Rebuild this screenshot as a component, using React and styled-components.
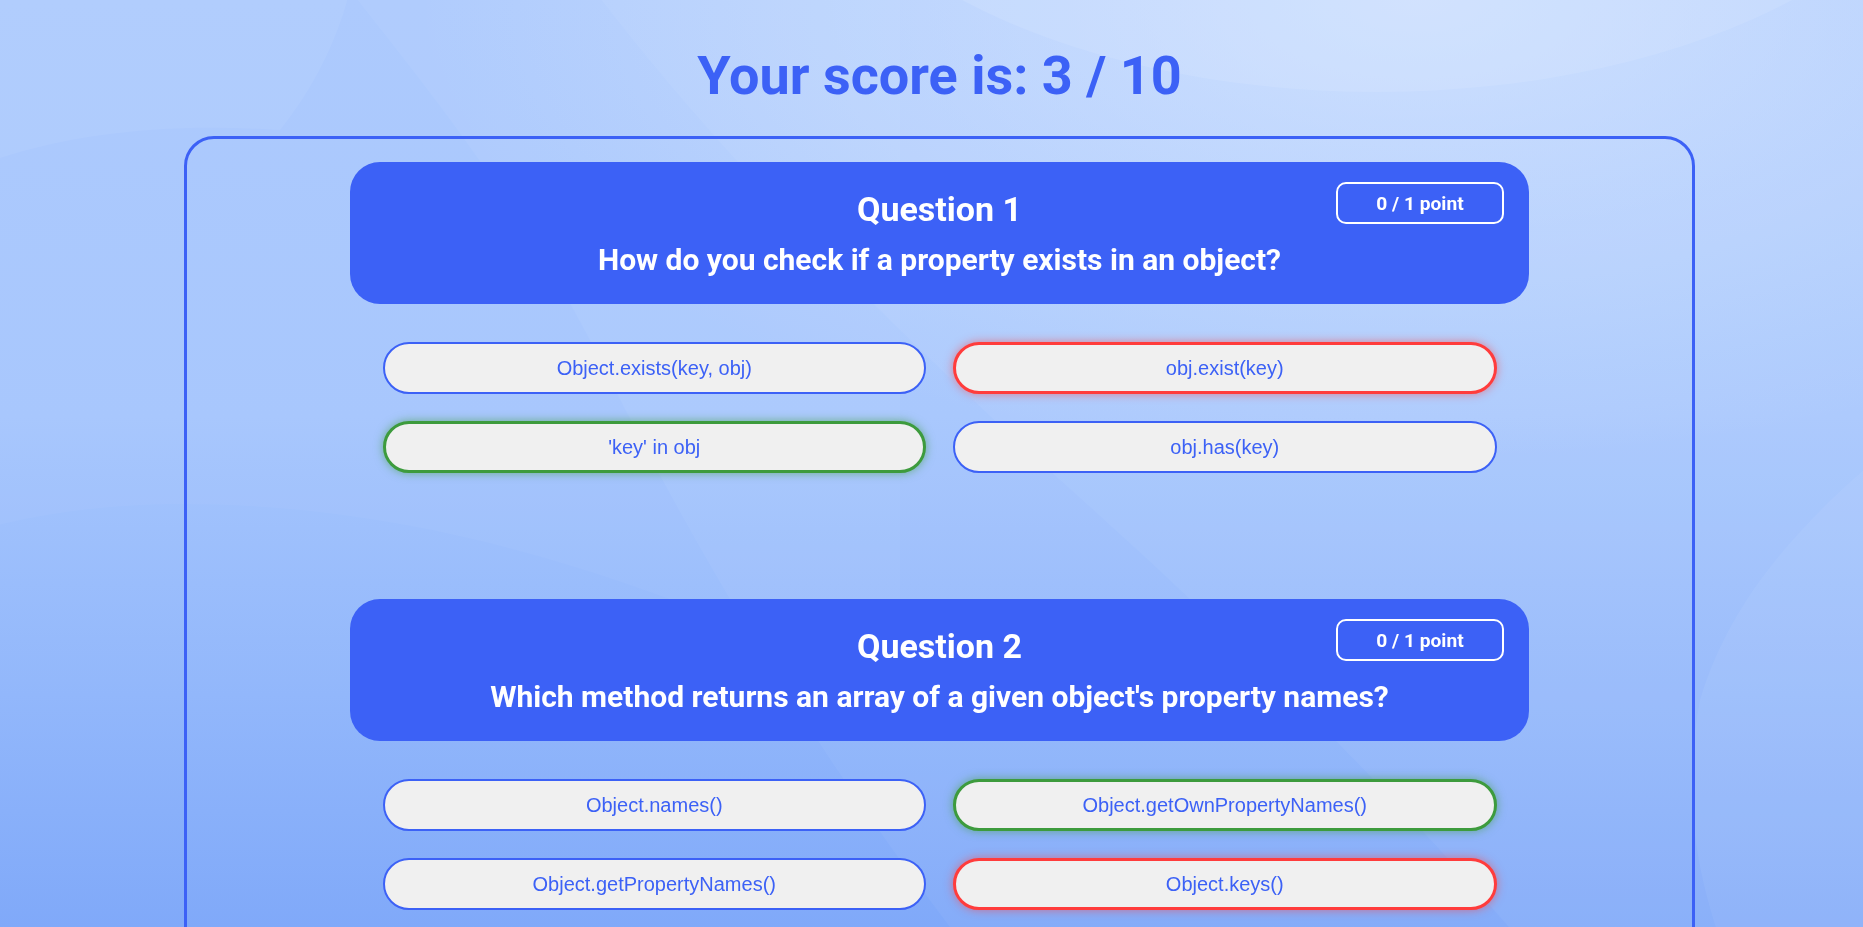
import React from "react";
import styled, { createGlobalStyle, css } from "styled-components";

const BLUE = "#3c61f6";

const GlobalStyle = createGlobalStyle`
  html, body { margin: 0; padding: 0; }
  body {
    min-height: 100vh;
    font-family: Roboto, "Noto Sans", sans-serif;
    background:
      radial-gradient(ellipse 1000px 460px at 76% 0%, rgba(220, 234, 255, 0.6), rgba(220, 234, 255, 0) 100%),
      linear-gradient(180deg, #abc9fd 0%, #a6c6fd 45%, #92b7fb 75%, #80a9f9 100%);
    background-attachment: fixed;
  }
`;

const Backdrop = styled.svg`
  position: fixed;
  inset: 0;
  width: 100%;
  height: 100%;
  z-index: 0;
  pointer-events: none;
`;

const Page = styled.main`
  position: relative;
  z-index: 1;
  display: flex;
  flex-direction: column;
  align-items: center;
  padding: 44px 0 0 16px;
`;

const Score = styled.h1`
  margin: 0 0 28px;
  font-family: Roboto, sans-serif;
  font-weight: 700;
  font-size: 54px;
  line-height: 64px;
  color: ${BLUE};
`;

const Results = styled.section`
  box-sizing: border-box;
  width: 1511px;
  border: 3px solid ${BLUE};
  border-radius: 30px;
  padding: 23px 0;
  display: flex;
  flex-direction: column;
  align-items: center;
`;

const Block = styled.article`
  width: 1179px;
  margin-bottom: 126px;
`;

const Card = styled.header`
  position: relative;
  box-sizing: border-box;
  height: 142px;
  background: ${BLUE};
  border-radius: 30px;
  padding: 27px 24px 25px;
  text-align: center;
  color: #fff;
`;

const QTitle = styled.h2`
  margin: 0 0 13px;
  font-weight: 700;
  font-size: 34px;
  line-height: 40px;
`;

const QText = styled.p`
  margin: 0;
  font-weight: 700;
  font-size: 30px;
  line-height: 36px;
`;

const Points = styled.span`
  position: absolute;
  top: 20px;
  right: 25px;
  box-sizing: border-box;
  width: 168px;
  height: 42px;
  border: 2px solid #fff;
  border-radius: 10px;
  display: flex;
  align-items: center;
  justify-content: center;
  font-weight: 700;
  font-size: 19.2px;
  color: #fff;
`;

const Answers = styled.div`
  display: grid;
  grid-template-columns: 1fr 1fr;
  gap: 27px 27px;
  margin-top: 38px;
  padding: 0 32.5px;
`;

const stateStyles = {
  correct: css`
    border: 3px solid #3d9b3d;
    box-shadow: 0 0 10px rgba(61, 155, 61, 0.6);
  `,
  wrong: css`
    border: 3px solid #ff3c3c;
    box-shadow: 0 0 10px rgba(255, 60, 60, 0.55);
  `,
  neutral: css`
    border: 2px solid ${BLUE};
  `,
};

const Answer = styled.div`
  box-sizing: border-box;
  height: 52px;
  border-radius: 26px;
  background: #f0f0f0;
  display: flex;
  align-items: center;
  justify-content: center;
  font-family: "Liberation Sans", Arial, sans-serif;
  font-size: 20px;
  color: ${BLUE};
  ${(p) => stateStyles[p.$state]}
`;

const questions = [
  {
    n: 1,
    text: "How do you check if a property exists in an object?",
    answers: [
      ["Object.exists(key, obj)", "neutral"],
      ["obj.exist(key)", "wrong"],
      ["'key' in obj", "correct"],
      ["obj.has(key)", "neutral"],
    ],
  },
  {
    n: 2,
    text: "Which method returns an array of a given object's property names?",
    answers: [
      ["Object.names()", "neutral"],
      ["Object.getOwnPropertyNames()", "correct"],
      ["Object.getPropertyNames()", "neutral"],
      ["Object.keys()", "wrong"],
    ],
  },
];

export default function App() {
  return (
    <>
      <GlobalStyle />
      <Backdrop viewBox="0 0 1863 927" preserveAspectRatio="none" aria-hidden="true">
        <path d="M 350 -10 C 420 80, 520 200, 600 360 C 700 560, 820 760, 960 940 L 1900 940 L 1900 -10 Z" fill="#ffffff" opacity="0.045" />
        <path d="M 594 -10 C 700 130, 860 300, 1060 480 C 1250 650, 1400 800, 1520 940 L 1900 940 L 1900 -10 Z" fill="#ffffff" opacity="0.045" />
        <ellipse cx="1377" cy="-230" rx="593" ry="322" fill="#ffffff" opacity="0.09" />
        <path d="M -20 165 C 60 135, 160 122, 280 130 C 320 80, 340 30, 350 -10 L -20 -10 Z" fill="#ffffff" opacity="0.05" />
        <path d="M -20 530 C 70 505, 170 498, 300 510 C 500 530, 700 600, 900 700 L 900 -10 L -20 -10 Z" fill="#ffffff" opacity="0.03" />
        <path d="M 1900 440 C 1800 520, 1730 600, 1700 700 C 1680 800, 1700 880, 1720 940 L 1900 940 Z" fill="#ffffff" opacity="0.05" />
      </Backdrop>
      <Page>
        <Score>Your score is: 3 / 10</Score>
        <Results>
          {questions.map((q) => (
            <Block key={q.n}>
              <Card>
                <QTitle>Question {q.n}</QTitle>
                <QText>{q.text}</QText>
                <Points>0 / 1 point</Points>
              </Card>
              <Answers>
                {q.answers.map(([label, state]) => (
                  <Answer key={label} $state={state}>
                    {label}
                  </Answer>
                ))}
              </Answers>
            </Block>
          ))}
        </Results>
      </Page>
    </>
  );
}
